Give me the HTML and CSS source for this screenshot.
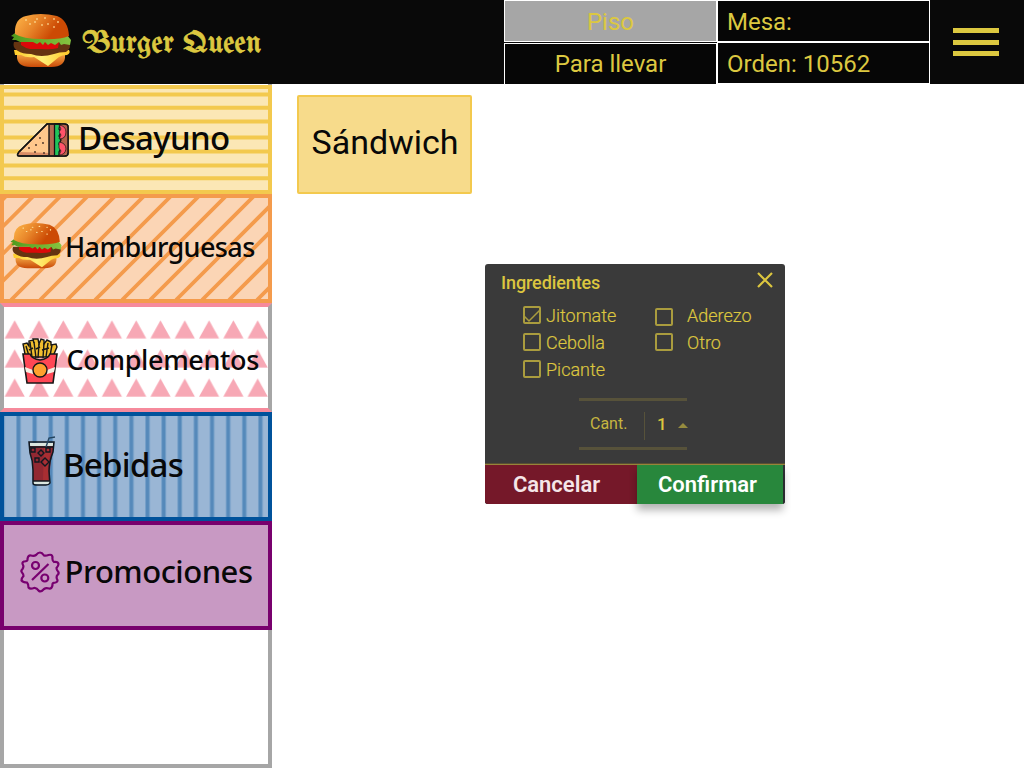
FILE: index.html
```html
<!DOCTYPE html>
<html lang="es">
<head>
<meta charset="utf-8">
<title>Burger Queen</title>
<link rel="stylesheet" href="styles.css">
</head>
<body>
<svg width="0" height="0" class="defs">
  <defs>
    <linearGradient id="bun" x1="0" y1="0" x2="1" y2=".35"><stop offset="0" stop-color="#ffb84a"/><stop offset=".45" stop-color="#e8862a"/><stop offset=".85" stop-color="#cc4a04"/></linearGradient>
    <linearGradient id="base" x1="0" y1="0" x2="0" y2="1"><stop offset="0" stop-color="#f0a040"/><stop offset="1" stop-color="#c94a08"/></linearGradient>
    <linearGradient id="leaf" x1="0" y1="0" x2="1" y2="0"><stop offset="0" stop-color="#4f9a1c"/><stop offset="1" stop-color="#86c440"/></linearGradient>
    <linearGradient id="cheese" x1="0" y1="0" x2="1" y2="0"><stop offset="0" stop-color="#ffcb28"/><stop offset=".5" stop-color="#fff078"/><stop offset="1" stop-color="#ffc828"/></linearGradient>
    <symbol id="burger" viewBox="0 0 60 54">
      <path d="M6 41H54Q55 53 40 53H20Q5 53 6 41Z" fill="url(#base)"/>
      <path d="M3 36H58Q60 39 56 41Q51 41 48 43L37 52L23 43Q15 44 10 41L4 41Z" fill="url(#cheese)"/>
      <path d="M3 28H58Q61 34 55 38Q48 38 43 40Q30 44 20 40Q11 40 7 37Q1 34 3 28Z" fill="#653411"/>
      <path d="M10 28H48L47 34Q40 36 31 35H19Q14 34 10 31Z" fill="#dc0909"/>
      <path d="M4 19L0 22L3 23L1 26L5 26L9 28L22 28L26 30L29 28L32 31L34 28L37 31L40 29L44 31L48 28L50 31L53 30L59 31L60 26L56 21Z" fill="url(#leaf)"/>
      <path d="M4 20Q3 5 15 2Q29-2 46 2Q57 6 58 22Q48 26 30 25Q12 25 4 20Z" fill="url(#bun)"/>
      <g fill="#ffe5a0"><ellipse cx="15" cy="6" rx="1" ry=".7"/><ellipse cx="26" cy="5" rx="1" ry=".7"/><ellipse cx="34" cy="4" rx="1" ry=".7"/><ellipse cx="43" cy="5" rx="1" ry=".7"/><ellipse cx="19" cy="10" rx="1" ry=".7"/><ellipse cx="24" cy="8" rx="1" ry=".7"/><ellipse cx="31" cy="11" rx="1" ry=".8"/><ellipse cx="37" cy="10" rx="1" ry=".7"/><ellipse cx="47" cy="8" rx=".8" ry="1"/><ellipse cx="43" cy="13" rx="1" ry=".7"/></g>
    </symbol>
    <pattern id="rows" width="24.3" height="29.1" patternUnits="userSpaceOnUse" patternTransform="translate(4.6 17.3)"><path d="M0 18.3L10.1 0L20.2 18.3Z" fill="#f7a8b5"/></pattern>
    <pattern id="bars" width="16.13" height="120" patternUnits="userSpaceOnUse" patternTransform="translate(16 0)"><path d="M0 0H5V120H0Z" fill="#75a0c9"/><path d="M1 0H4V120H1Z" fill="#5589ba"/></pattern>
  </defs>
</svg>

<header class="topbar">
  <div class="brand">
    <svg class="brand-logo"><use href="#burger"/></svg>
    <h1 class="brand-name">Burger Queen</h1>
  </div>
  <div class="order-info">
    <div class="cell cell-active">Piso</div>
    <div class="cell cell-left">Mesa:</div>
    <div class="cell cell-second">Para llevar</div>
    <div class="cell cell-left">Orden: 10562</div>
  </div>
  <div class="menu"><span></span><span></span><span></span></div>
</header>

<div class="layout">
  <nav class="sidebar">
    <div class="category breakfast">
      <svg class="texture" viewBox="0 0 272 109"><path d="M0 9.5H272.5M0 22.7H272.5M0 36.5H272.5M0 52.4H272.5M0 66.4H272.5M0 80.4H272.5M0 93.2H272.5" stroke="#f3c94e" stroke-width="4"/></svg>
      <svg class="icon icon-sandwich" viewBox="0 0 54 36">
        <path d="M31 2H48Q52 2 52 5V31Q52 34 49 34H3Q0 34 3 30Z" fill="#ffc78c" stroke="#141414" stroke-width="1.5"/>
        <path d="M3 30L36 31V33H3Z" fill="#d98c65"/>
        <path d="M33 3H38V33H33Z" fill="#b36a50"/><path d="M44 2H50Q52 3 52 6V31L48 34H43Z" fill="#b4614a"/>
        <path d="M33 3V33" stroke="#141414" stroke-width="1.4"/>
        <path d="M38.500 2H44L43 7L45 10L43 14L45 18L43 22L45 26L43 30L43 34H38.500Z" fill="#22c45b" stroke="#141414" stroke-width="1.3"/>
        <path d="M43 3Q50 4 50 10Q50 17 43 17L45 13L43 10L45 7ZM43 20Q50 21 50 27Q49 33 43 33L45 29L43 26Z" fill="#ff5369" stroke="#141414" stroke-width=".7"/>
        <path d="M31 2H48Q52 2 52 5V31Q52 34 49 34H3Q0 34 3 30Z" fill="none" stroke="#141414" stroke-width="1.5"/>
        <g fill="#412b22"><circle cx="24" cy="16" r=".9"/><circle cx="27" cy="21" r=".9"/><circle cx="20" cy="23" r=".9"/><circle cx="13" cy="26" r=".9"/><circle cx="19" cy="30" r=".9"/><circle cx="28" cy="31" r=".9"/></g>
      </svg>
      <span class="label">Desayuno</span>
    </div>
    <div class="category burgers">
      <svg class="texture" viewBox="0 0 272 109"><path d="M-97.8 106L8.2 0M-70.6 106L35.4 0M-43.4 106L62.6 0M-16.2 106L89.8 0M11 106L117 0M40 106L146 0M67 106L173 0M95 106L201 0M122 106L228 0M150 106L256 0M176 106L282 0M202 106L308 0M229 106L335 0M257 106L363 0" stroke="#f49b4c" stroke-width="3.8"/></svg>
      <svg class="icon icon-burger"><use href="#burger"/></svg>
      <span class="label">Hamburguesas</span>
    </div>
    <div class="category sides">
      <svg class="texture" viewBox="0 0 272 109"><rect x="4" y="17.3" width="264" height="77" fill="url(#rows)"/></svg>
      <svg class="icon icon-fries" viewBox="0 0 36 46">
        <path d="M3 16L1 6L5 5L7 8L7 3L11 2L12 5L11 1L16 1L17 6L19 1L22 2L22 6L25 2L29 4L29 7L34 6L35 9L32 16V19H4Z" fill="#f0bd2f" stroke="#171717" stroke-width="1.4"/>
        <path d="M4 8L7 18M8 4L10 19M12 4L14 20M17 6L16 20M22 5L21 20M26 5L24 19M30 7L28 18M7 12L11 10M14 11L18 9M20 12L27 10" stroke="#171717" stroke-width="1.4" fill="none"/>
        <path d="M1 16H8Q10 21 18 22Q26 21 28 16H35L31 45H5Z" fill="#ff4755" stroke="#171717" stroke-width="1.6"/>
        <path d="M2.8 29L11 32V36L4 34ZM33.2 29L25 32V36L32 34Z" fill="#f4eee2"/>
        <circle cx="18" cy="32" r="7" fill="#ffa02e" stroke="#171717" stroke-width="1.4"/>
      </svg>
      <span class="label">Complementos</span>
    </div>
    <div class="category drinks">
      <svg class="texture" viewBox="0 0 272 109"><rect x="4" y="4" width="264" height="101" fill="url(#bars)"/></svg>
      <svg class="icon icon-soda" viewBox="0 0 28 50">
        <path d="M1 7H26L25 16Q22 25 22 34V48H5V34Q5 25 2 17Z" fill="#922832"/>
        <path d="M2 7H25V10H2ZM5 45H22V48H5Z" fill="#dce6df"/>
        <path d="M16 12H23L21 25L20 44H15Z" fill="#a92e32"/>
        <path d="M1 6H26L25 16Q21 26 21 35L22 47Q21 49 18 49H8Q5 49 5 47V34Q5 25 2 17ZM2 11H25M5 45H21" fill="none" stroke="#101820" stroke-width="1.5"/>
        <path d="M18 11L21 2L27 1" fill="none" stroke="#23445f" stroke-width="1.4"/>
        <path d="M3 12H7V16H3ZM18 12H22V16H18ZM13 14L16 17L13 20L10 17ZM7 22H11V26H7ZM17 22L21 26L17 30L13 26Z" fill="none" stroke="#101820" stroke-width="1.4"/>
      </svg>
      <span class="label">Bebidas</span>
    </div>
    <div class="category promos">
      <svg class="icon icon-promo" viewBox="0 0 40 42">
        <path d="M20 1.5Q22 1.5 24 4.5Q26 5 28.5 4Q32 3 32.5 6Q32 10 34 11Q38 10.5 38.5 13Q38.5 15 36.5 17Q36.500 19 38 20.500Q39.500 22 37.500 24Q36 25.500 37 28Q38.500 30.500 35.500 31.500Q32 31.500 32.500 34Q32 38 29 37.500Q26 36.500 24 38Q21 41.500 19 40Q16.500 36.500 14 37Q10 38.500 8.500 36.500Q8.500 33 7 31.500Q3 31.500 1.500 29.500Q1.500 27 3.500 25Q3.500 23 2 21.500Q0.500 20 2.500 18Q4 16 3 14Q1.500 11.500 4 10.500Q8 10.500 7.500 8Q8 4 11 4.500Q14 5.500 16 4Q18 1.500 20 1.500Z"/>
        <circle cx="15.500" cy="14.500" r="3.500"/><circle cx="24.800" cy="27" r="3.500"/><path d="M28.500 13L12 29"/>
      </svg>
      <span class="label">Promociones</span>
    </div>
  </nav>

  <main class="content">
    <button class="product">Sándwich</button>
    <section class="dialog">
      <div class="dialog-head">
        <h2>Ingredientes</h2>
        <svg class="close" viewBox="0 0 18 18"><path d="M2 2L16 16M16 2L2 16" stroke="#dcc63f" stroke-width="2.2"/></svg>
      </div>
      <div class="options">
        <div class="option-column">
          <label class="option"><svg class="box" viewBox="0 0 18 18"><rect x="1" y="1" width="16" height="16" rx="1"/><path d="M1 10L6 15L17 4"/></svg>Jitomate</label>
          <label class="option"><svg class="box" viewBox="0 0 18 18"><rect x="1" y="1" width="16" height="16" rx="1"/></svg>Cebolla</label>
          <label class="option"><svg class="box" viewBox="0 0 18 18"><rect x="1" y="1" width="16" height="16" rx="1"/></svg>Picante</label>
        </div>
        <div class="option-column option-column-right">
          <label class="option"><svg class="box box-low" viewBox="0 0 18 18"><rect x="1" y="1" width="16" height="16" rx="1"/></svg>Aderezo</label>
          <label class="option"><svg class="box" viewBox="0 0 18 18"><rect x="1" y="1" width="16" height="16" rx="1"/></svg>Otro</label>
        </div>
      </div>
      <div class="quantity">
        <span class="quantity-label">Cant.</span>
        <span class="quantity-value">1</span>
        <svg class="arrow" viewBox="0 0 10 5"><path d="M0 5L5 0L10 5Z" fill="#958b3e"/></svg>
      </div>
      <div class="actions">
        <button class="action cancel">Cancelar</button>
        <button class="action confirm">Confirmar</button>
      </div>
    </section>
  </main>
</div>
</body>
</html>
```

FILE: styles.css
```css
* { box-sizing: border-box; }
body { margin: 0; width: 1024px; height: 768px; overflow: hidden; background: #fff; font-family: Roboto, "Liberation Sans", sans-serif; }
h1, h2 { margin: 0; font-weight: 500; }
button { font-family: inherit; border: 0; padding: 0; margin: 0; }
svg { display: block; flex: none; }
.defs { position: absolute; }

.topbar { display: flex; height: 84px; background: #090909; color: #dcc840; }
.brand { display: flex; width: 504px; padding: 14px 0 0 10.5px; }
.brand-logo { width: 60px; height: 54px; }
.brand-name { margin-left: 12px; height: 54px; font: 31px/60px "Old English Text MT", "UnifrakturMaguntia", "UnifrakturCook", "Liberation Serif", serif; -webkit-text-stroke: .7px; white-space: nowrap; }
.order-info { display: grid; grid-template-columns: 213px 213px; grid-template-rows: 42px 42px; width: 426px; }
.cell { border: 1px solid #fff; background: #060606; font-size: 24px; line-height: 42px; text-align: center; }
.cell-active { background: #a6a6a6; }
.cell-second { margin-top: 1px; border-bottom: 0; line-height: 40px; }
.cell-left { text-align: left; padding-left: 9px; }
.menu { display: flex; flex-direction: column; gap: 6.5px; padding: 28px 0 0 23px; }
.menu span { width: 46px; height: 5px; background: #dcc840; }

.layout { display: flex; height: 684px; }
.sidebar { width: 272px; flex: none; background: linear-gradient(#a6a6a6, #a6a6a6) left / 4px 100% no-repeat, linear-gradient(#a6a6a6, #a6a6a6) right / 4px 100% no-repeat, #fff; border-bottom: 4px solid #a6a6a6; padding-top: 1px; }
.category { display: grid; height: 109px; border: 4px solid; color: #f3c94e; }
.category > * { grid-area: 1 / 1; }
.texture { width: 272px; height: 109px; margin: -4px; clip-path: inset(4px 0 4px 4px); }
.label { z-index: 1; color: #080808; font-family: "Segoe UI", "Noto Sans", sans-serif; font-weight: 500; white-space: nowrap; height: 50px; line-height: 50px; }
.icon { z-index: 1; }
.breakfast { background: #fbe7b5; border-color: #f3c94e; }
.breakfast .label { margin: 24px 0 0 74px; font-size: 33px; letter-spacing: -.7px; }
.icon-sandwich { width: 54px; height: 36px; margin: 33px 0 0 12px; }
.burgers { background: #fbd5b5; border-color: #f49b4c; }
.burgers .label { margin: 24px 0 0 61px; font-size: 27px; letter-spacing: -.6px; }
.icon-burger { width: 52px; height: 46px; margin: 25px 0 0 5.5px; }
.icon-burger use, .brand-logo use { width: 100%; height: 100%; }
.sides { background: #fff; border-color: #f68a9c transparent; border-left: 4px solid #a6a6a6; border-right: 4px solid #a6a6a6; }
.sides .label { margin: 28px 0 0 62.5px; font-size: 27px; letter-spacing: -.35px; }
.icon-fries { width: 36px; height: 46px; margin: 31px 0 0 17.5px; }
.drinks { background: #9ab6d5; border-color: #00529b; }
.drinks .label { margin: 24px 0 0 59px; font-size: 33px; letter-spacing: -.75px; }
.icon-soda { width: 28px; height: 50px; margin: 20px 0 0 24px; }
.promos { background: #c899c3; border-color: #78006d; }
.promos .label { margin: 21px 0 0 60.5px; font-size: 31px; letter-spacing: -.5px; }
.icon-promo { width: 40px; height: 42px; margin: 26px 0 0 16px; fill: none; stroke: #780070; stroke-width: 2.2; }

.content { padding: 11px 0 0 25px; }
.product { display: block; width: 175px; height: 99px; border: 2px solid #f3c94e; border-radius: 2px; background: #f7db8b; color: #080808; font-size: 34px; line-height: 40px; padding: 0 0 5px 1px; }
.dialog { width: 300px; height: 240px; margin: 70px 0 0 188px; border-radius: 3px; background: #3a3a3a; color: #dcc63f; display: flex; flex-direction: column; }
.dialog-head { display: flex; justify-content: space-between; height: 38px; padding: 7px 11.5px 0 16px; }
.dialog-head h2 { font-size: 18px; line-height: 24px; letter-spacing: -.1px; }
.close { width: 18px; height: 18px; }
.options { display: flex; height: 96px; padding-left: 38px; font-size: 18px; font-weight: 300; -webkit-text-stroke: .2px; }
.option-column { width: 132px; }
.option { display: flex; gap: 5px; height: 27px; line-height: 27px; }
.option-column-right .option { gap: 14px; padding-left: 1px; }
.box { width: 18px; height: 18px; margin-top: 4.3px; fill: none; stroke: #aa9c3e; stroke-width: 2; }
.box path { stroke-width: 1.5; }
.box-low { margin-top: 6px; }
.quantity { display: flex; align-items: center; width: 110px; height: 52px; margin-left: 94px; border: solid #57523a; border-width: 3px 0; border-image: linear-gradient(90deg, #57523a 108px, transparent 108px) 3 0; }
.quantity-label { width: 66px; padding-left: 11px; height: 28px; margin-top: 3px; border-right: 1px solid #57523a; font-size: 16px; line-height: 24px; color: #c6b540; }
.quantity-value { width: 33px; padding-left: 12px; font-size: 17px; font-weight: 500; }
.arrow { width: 10px; height: 5px; margin-top: 3px; }
.actions { display: flex; height: 40px; margin-top: auto; border-top: 1px solid #97843a; box-shadow: 0 -1px 0 #594f33; border-radius: 0 0 3px 3px; padding-right: 2px; background: #303236; }
.action { font-size: 22px; font-weight: 600; color: #f5e6e8; padding-bottom: 1px; }
.cancel { width: 152px; background: #751829; padding-right: 9px; border-radius: 0 0 0 3px; }
.confirm { width: 146px; background: #28873c; padding-right: 5px; color: #fff; box-shadow: 0 6px 8px rgba(0, 0, 0, .3); clip-path: inset(0 -8px -20px -8px); }
```
